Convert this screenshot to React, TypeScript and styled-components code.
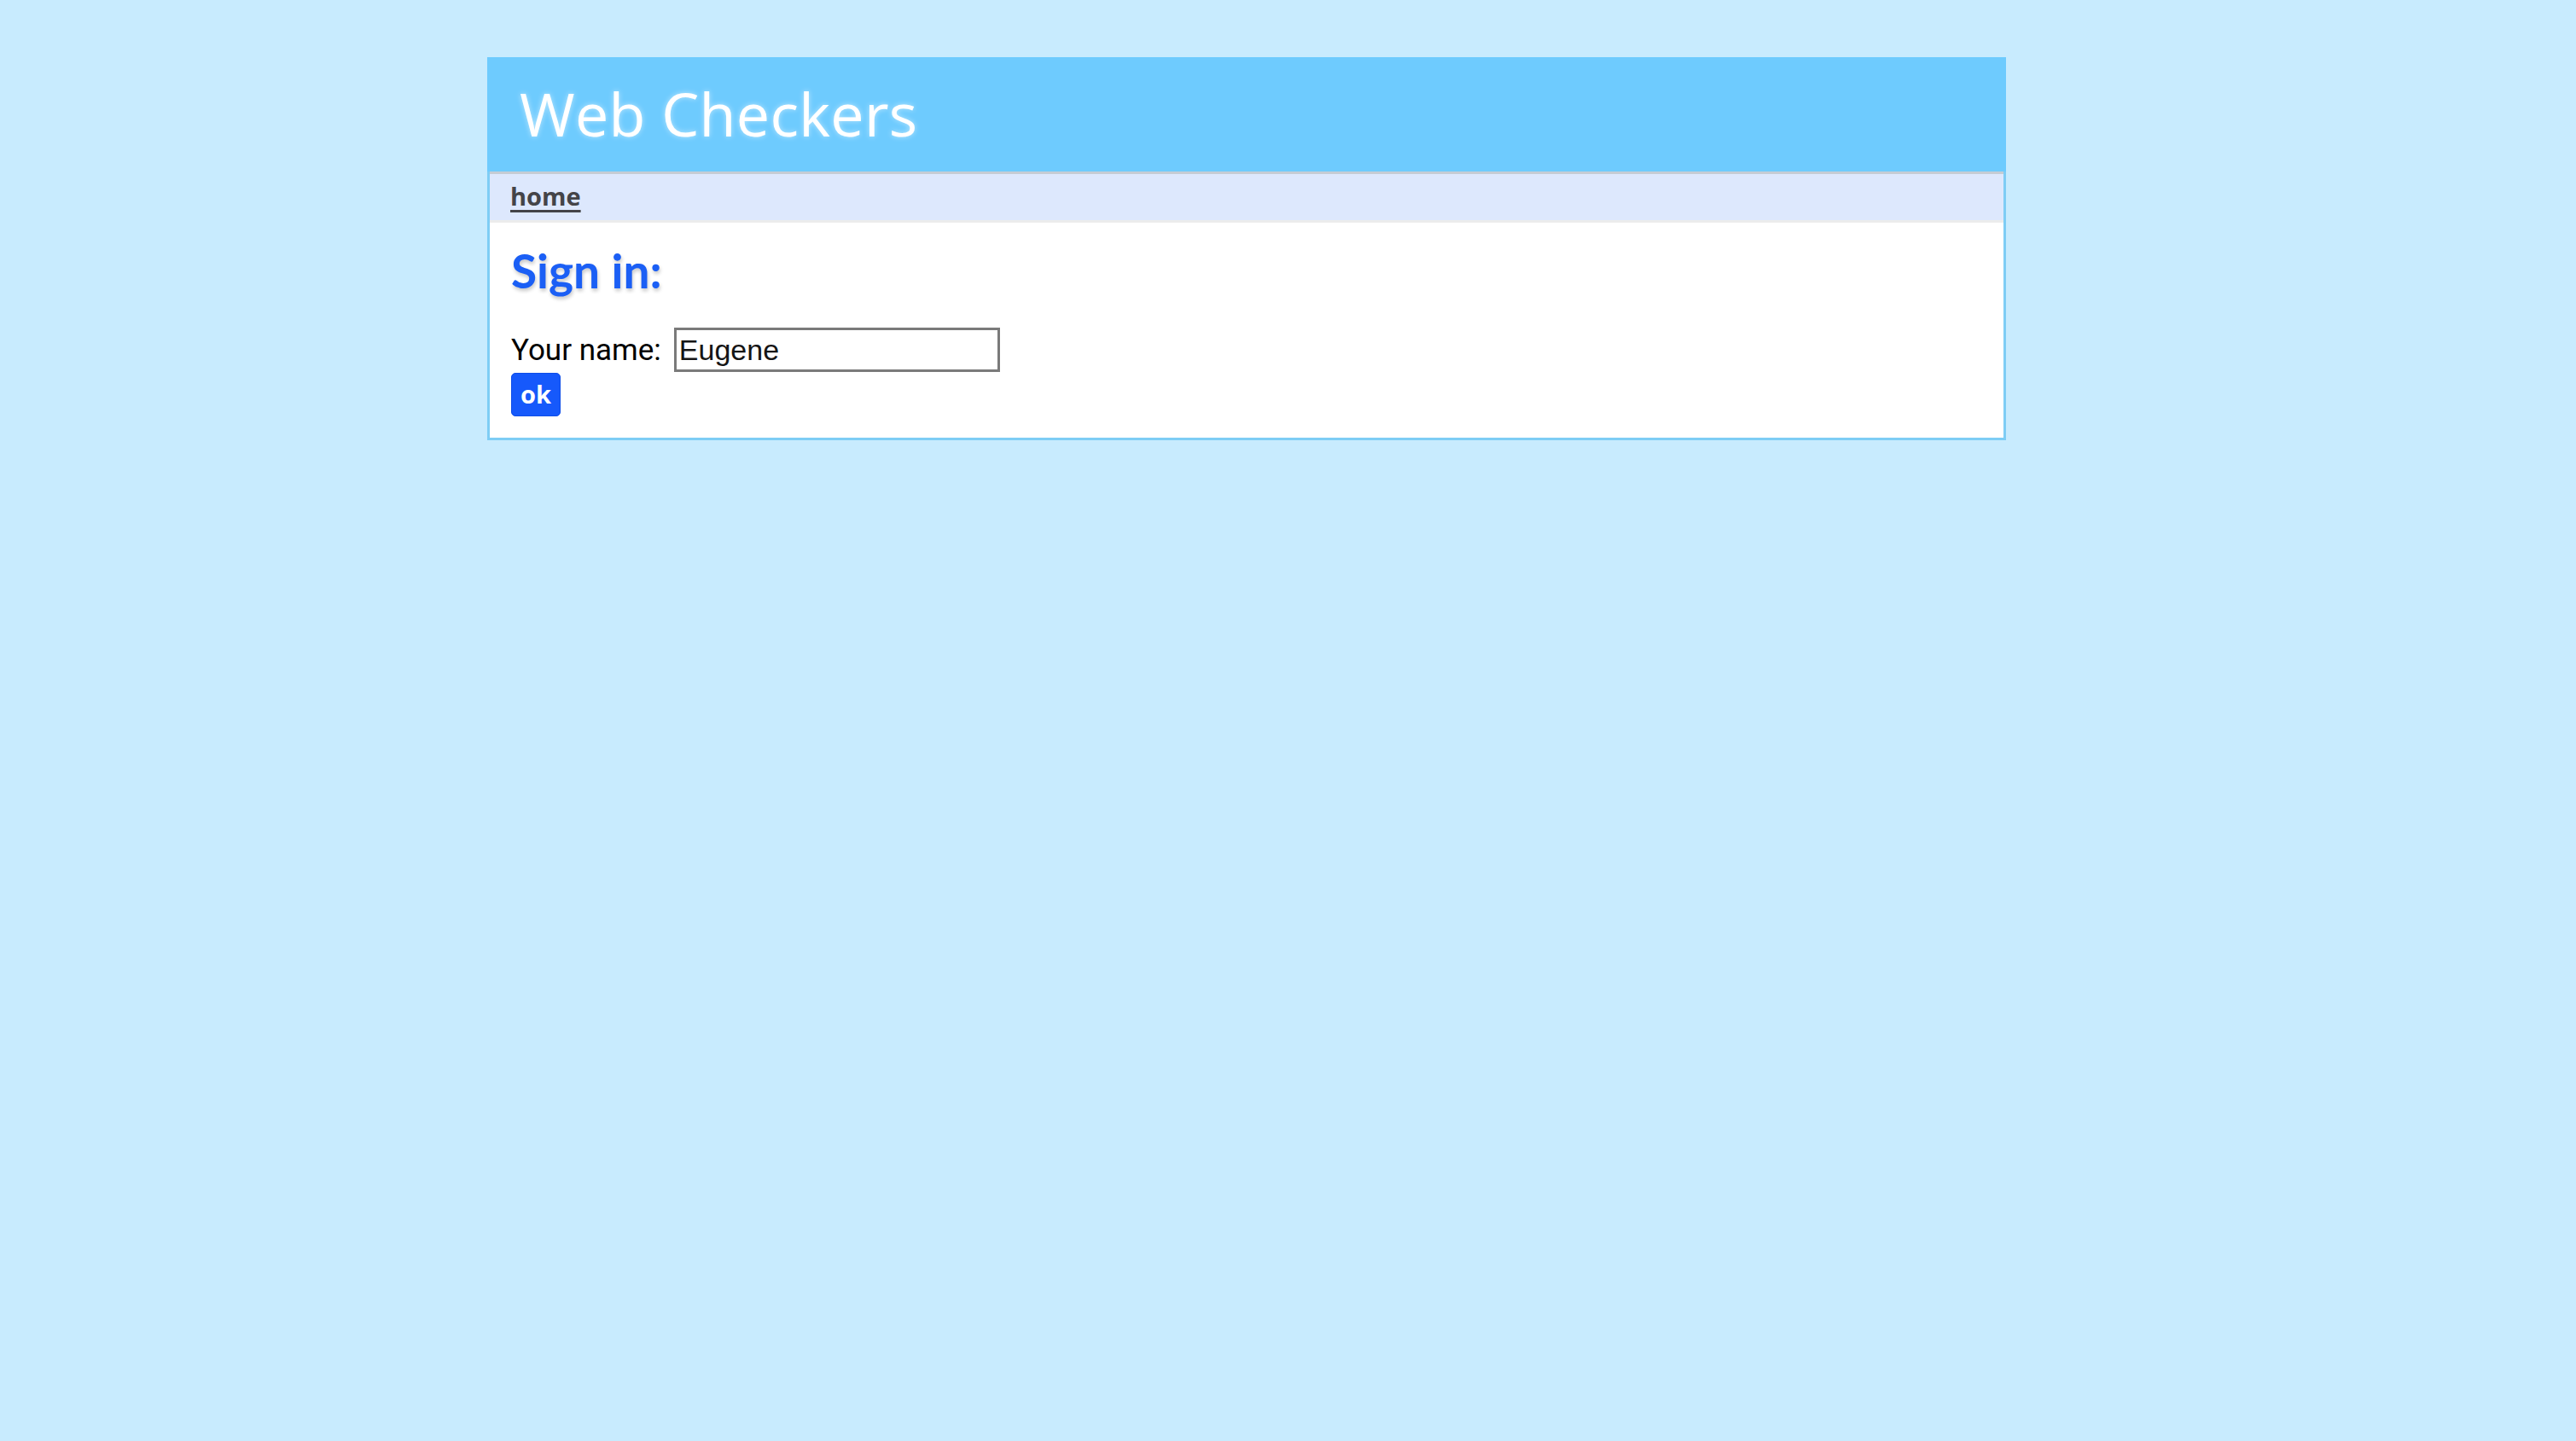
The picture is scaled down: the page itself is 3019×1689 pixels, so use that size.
import React from "react";
import styled, { createGlobalStyle } from "styled-components";

const GlobalStyle = createGlobalStyle`
  html, body {
    margin: 0;
    padding: 0;
    background: #c8ebfe;
  }
  body {
    font-family: "Roboto", "Liberation Sans", sans-serif;
  }
`;

const Page = styled.div`
  padding-top: 67px;
  padding-left: 571px;
  min-height: 1689px;
  box-sizing: border-box;
`;

const Panel = styled.div`
  width: 1780px;
  display: flex;
  flex-direction: column;
`;

const Header = styled.header`
  height: 134px;
  box-sizing: border-box;
  background: #6ecbfe;
  padding: 31px 0 0 38px;
`;

const Title = styled.h1`
  margin: 0;
  font-family: "Open Sans", "Noto Sans", sans-serif;
  font-weight: 400;
  font-size: 70px;
  line-height: 70px;
  letter-spacing: 0.3px;
  color: #ffffff;
  text-shadow: 0 0 6px rgba(255, 255, 255, 0.55);
`;

const Frame = styled.div`
  border: 3px solid #7ecdf5;
  border-top: none;
  display: flex;
  flex-direction: column;
`;

const Nav = styled.nav`
  height: 60px;
  box-sizing: border-box;
  background: #dde8fd;
  border-top: 3px solid #c5ccd4;
  border-bottom: 3px solid #ececec;
  padding: 12px 0 0 24px;
`;

const NavLink = styled.a`
  font-family: "Open Sans", "Noto Sans", sans-serif;
  font-weight: 700;
  font-size: 29px;
  line-height: 28px;
  color: #444448;
  text-decoration: underline;
  text-decoration-thickness: 3px;
  text-underline-offset: 5px;
`;

const Content = styled.main`
  background: #ffffff;
  padding: 30px 0 25px 25px;
  display: flex;
  flex-direction: column;
  align-items: flex-start;
`;

const Heading = styled.h2`
  margin: 0 0 40px 0;
  font-family: "Lato", "Open Sans", sans-serif;
  font-weight: 700;
  font-size: 55px;
  line-height: 53px;
  color: #1b5ff5;
  text-shadow: 1px 3px 4px rgba(0, 0, 0, 0.22);
`;

const FormRow = styled.div`
  display: flex;
  align-items: center;
  gap: 15px;
`;

const Label = styled.label`
  font-family: "Roboto", "Liberation Sans", sans-serif;
  font-size: 35px;
  line-height: 35px;
  color: #000000;
`;

const NameInput = styled.input`
  width: 382px;
  height: 52px;
  box-sizing: border-box;
  border: 3px solid #7a7a7a;
  border-radius: 0;
  padding: 0 3px;
  font-family: "Liberation Sans", Arial, sans-serif;
  font-size: 34px;
  color: #151515;
  background: #ffffff;
  outline: none;
`;

const OkButton = styled.button`
  margin-top: 1px;
  width: 58px;
  height: 51px;
  box-sizing: border-box;
  background: #1659fb;
  border: 1px solid #0f4ee8;
  border-radius: 5px;
  padding: 0 0 2px 0;
  font-family: "Open Sans", "Noto Sans", sans-serif;
  font-weight: 700;
  font-size: 29px;
  line-height: 29px;
  color: #ffffff;
  cursor: pointer;
`;

export default function App() {
  return (
    <>
      <GlobalStyle />
      <Page>
        <Panel>
          <Header>
            <Title>Web Checkers</Title>
          </Header>
          <Frame>
            <Nav>
              <NavLink href="#">home</NavLink>
            </Nav>
            <Content>
              <Heading>Sign in:</Heading>
              <FormRow>
                <Label htmlFor="name">Your name:</Label>
                <NameInput id="name" defaultValue="Eugene" />
              </FormRow>
              <OkButton type="button">ok</OkButton>
            </Content>
          </Frame>
        </Panel>
      </Page>
    </>
  );
}
